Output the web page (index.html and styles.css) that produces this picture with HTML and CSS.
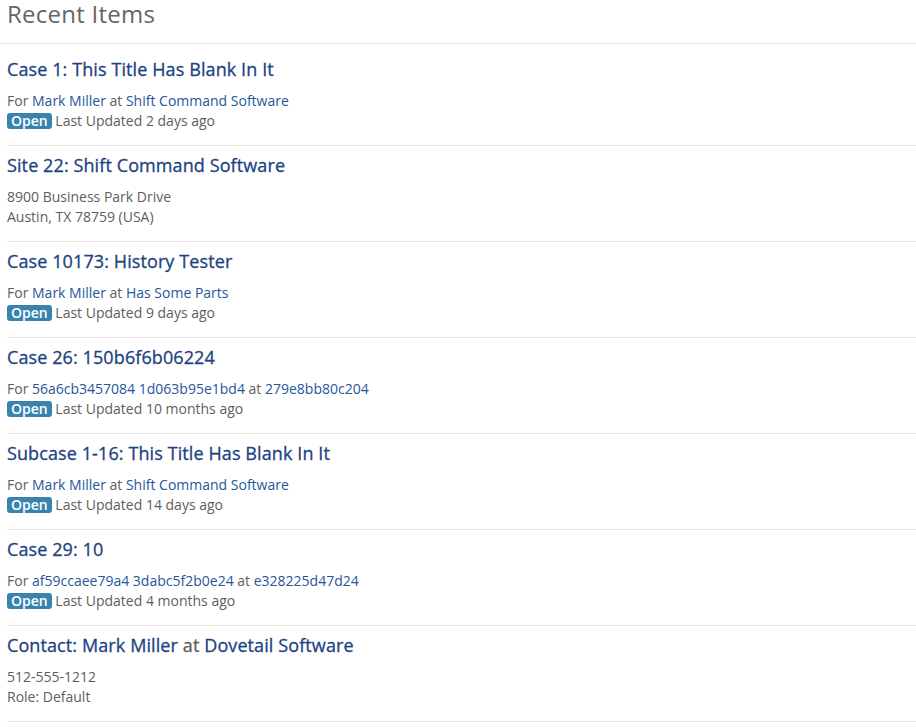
FILE: index.html
```html
<!DOCTYPE html>
<html lang="en">
<head>
<meta charset="utf-8">
<title>Recent Items</title>
<link rel="stylesheet" href="styles.css">
</head>
<body>
<div class="page">
  <div class="header">
    <h2 class="header-title">Recent Items</h2>
  </div>
  <ul class="items">
    <li class="item">
      <h4 class="item-title"><a href="#">Case 1: This Title Has Blank In It</a></h4>
      <div class="line">For <a href="#">Mark Miller</a> at <a href="#">Shift Command Software</a></div>
      <div class="line"><span class="badge">Open</span> Last Updated 2 days ago</div>
    </li>
    <li class="item">
      <h4 class="item-title"><a href="#">Site 22: Shift Command Software</a></h4>
      <div class="line">8900 Business Park Drive</div>
      <div class="line">Austin, TX 78759 (USA)</div>
    </li>
    <li class="item">
      <h4 class="item-title"><a href="#">Case 10173: History Tester</a></h4>
      <div class="line">For <a href="#">Mark Miller</a> at <a href="#">Has Some Parts</a></div>
      <div class="line"><span class="badge">Open</span> Last Updated 9 days ago</div>
    </li>
    <li class="item">
      <h4 class="item-title"><a href="#">Case 26: 150b6f6b06224</a></h4>
      <div class="line">For <a href="#">56a6cb3457084 1d063b95e1bd4</a> at <a href="#">279e8bb80c204</a></div>
      <div class="line"><span class="badge">Open</span> Last Updated 10 months ago</div>
    </li>
    <li class="item">
      <h4 class="item-title"><a href="#">Subcase 1-16: This Title Has Blank In It</a></h4>
      <div class="line">For <a href="#">Mark Miller</a> at <a href="#">Shift Command Software</a></div>
      <div class="line"><span class="badge">Open</span> Last Updated 14 days ago</div>
    </li>
    <li class="item">
      <h4 class="item-title"><a href="#">Case 29: 10</a></h4>
      <div class="line">For <a href="#">af59ccaee79a4 3dabc5f2b0e24</a> at <a href="#">e328225d47d24</a></div>
      <div class="line"><span class="badge">Open</span> Last Updated 4 months ago</div>
    </li>
    <li class="item">
      <h4 class="item-title"><a href="#">Contact: Mark Miller</a> <span class="muted">at</span> <a href="#">Dovetail Software</a></h4>
      <div class="line">512-555-1212</div>
      <div class="line">Role: Default</div>
    </li>
  </ul>
</div>
</body>
</html>
```

FILE: styles.css
```css
html, body {
  margin: 0;
  padding: 0;
  background: #ffffff;
}
body {
  font-family: "Open Sans", "Liberation Sans", sans-serif;
  font-size: 14px;
  line-height: 20px;
  color: #5e5e5e;
}
a {
  color: #26569a;
  text-decoration: none;
}
.page {
  width: 916px;
}
.header {
  border-bottom: 1px solid #e6e6e6;
  padding: 1px 7px 16px;
}
.header-title {
  margin: 0;
  font-size: 24px;
  font-weight: 400;
  line-height: 26px;
  letter-spacing: 0.25px;
  color: #666666;
}
.items {
  list-style: none;
  margin: 0 0 0 7px;
  padding: 6px 0 0;
}
.item {
  border-bottom: 1px solid #e6e6e6;
  padding: 9px 0 14px;
}
.item-title {
  margin: 0 0 12px;
  font-size: 18px;
  font-weight: 400;
  line-height: 20px;
  letter-spacing: 0.1px;
  -webkit-text-stroke: 0.3px currentColor;
}
.item-title a {
  color: #1d4282;
}
.muted {
  color: #5e5e5e;
}
.line {
  height: 20px;
}
.badge {
  display: inline-block;
  vertical-align: top;
  margin-top: 2px;
  padding: 0 4px;
  height: 16px;
  line-height: 16px;
  font-size: 14px;
  font-weight: 600;
  color: #ffffff;
  background: #3984aa;
  border-radius: 3px;
}
```
